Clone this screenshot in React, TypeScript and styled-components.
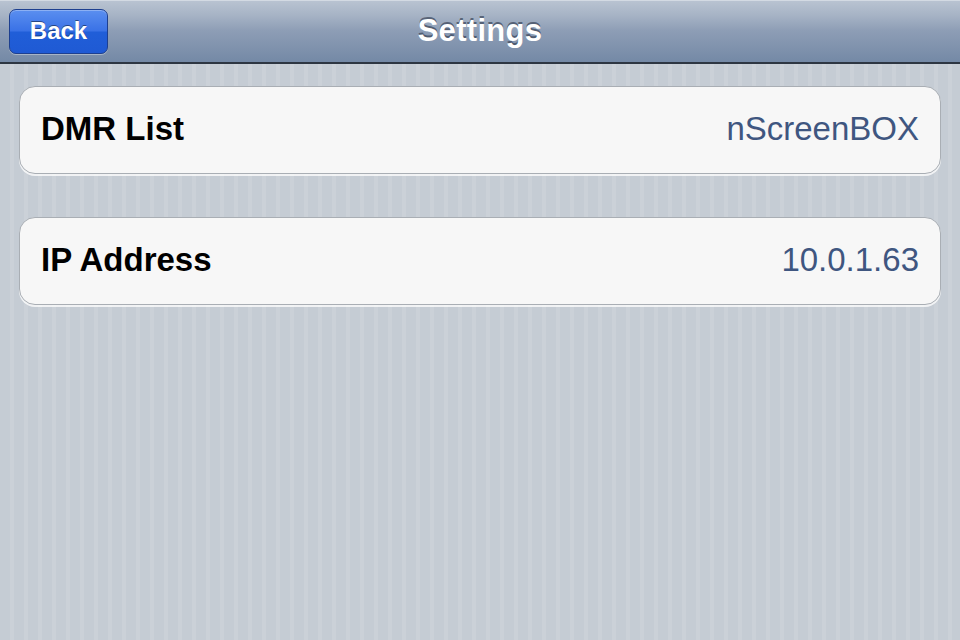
import React from "react";
import styled, { createGlobalStyle } from "styled-components";

const GlobalStyle = createGlobalStyle`
  html, body {
    margin: 0;
    padding: 0;
    width: 960px;
    height: 640px;
    overflow: hidden;
  }
  body {
    font-family: "Liberation Sans", Arial, sans-serif;
  }
`;

const Screen = styled.div`
  width: 960px;
  height: 640px;
  display: flex;
  flex-direction: column;
  background-color: #c6cdd5;
  background-image: repeating-linear-gradient(
    90deg,
    #c5ccd4 0px,
    #c5ccd4 10px,
    #cbd1d8 10px,
    #cbd1d8 14px
  );
`;

const NavBar = styled.div`
  height: 64px;
  flex-shrink: 0;
  display: grid;
  grid-template-columns: 1fr auto 1fr;
  align-items: center;
  padding: 0 9px;
  box-sizing: border-box;
  background: linear-gradient(
    to bottom,
    #bac4d2 0%,
    #a6b3c5 25%,
    #8d9db5 50%,
    #7489a6 100%
  );
  border-bottom: 2px solid #2d3642;
  box-shadow: inset 0 1px 0 #d3dae3;
`;

const BackButton = styled.button`
  justify-self: start;
  width: 99px;
  height: 45px;
  border-radius: 7px;
  border: 1px solid #1d3f8f;
  background: linear-gradient(
    to bottom,
    #5b8ff0 0%,
    #3a72e6 48%,
    #205ed8 52%,
    #1f5ad4 100%
  );
  box-shadow: 0 1px 0 rgba(255, 255, 255, 0.35), inset 0 1px 0 rgba(255, 255, 255, 0.3);
  color: #fff;
  font-family: "Liberation Sans", Arial, sans-serif;
  font-weight: bold;
  font-size: 24px;
  text-shadow: 0 -1px 0 rgba(0, 0, 0, 0.45);
  padding: 0;
`;

const Title = styled.h1`
  margin: 0;
  color: #fff;
  font-size: 31px;
  font-weight: bold;
  text-shadow: 0 -2px 0 rgba(40, 50, 70, 0.6);
  letter-spacing: 0.3px;
`;

const Content = styled.div`
  display: flex;
  flex-direction: column;
  gap: 43px;
  padding: 22px 19px 0 19px;
`;

const Card = styled.div`
  height: 88px;
  display: flex;
  align-items: center;
  justify-content: space-between;
  padding: 0 21px 2px 21px;
  box-sizing: border-box;
  background: #f7f7f7;
  border: 1px solid #a9aeb4;
  border-radius: 16px;
  box-shadow: 0 2px 0 rgba(255, 255, 255, 0.75);
`;

const Label = styled.span`
  font-size: 33px;
  font-weight: bold;
  color: #000;
`;

const Value = styled.span`
  font-size: 33px;
  color: #3f5680;
`;

const rows = [
  { label: "DMR List", value: "nScreenBOX" },
  { label: "IP Address", value: "10.0.1.63" },
];

export default function App() {
  return (
    <Screen>
      <GlobalStyle />
      <NavBar>
        <BackButton>Back</BackButton>
        <Title>Settings</Title>
        <span />
      </NavBar>
      <Content>
        {rows.map((r) => (
          <Card key={r.label}>
            <Label>{r.label}</Label>
            <Value>{r.value}</Value>
          </Card>
        ))}
      </Content>
    </Screen>
  );
}
